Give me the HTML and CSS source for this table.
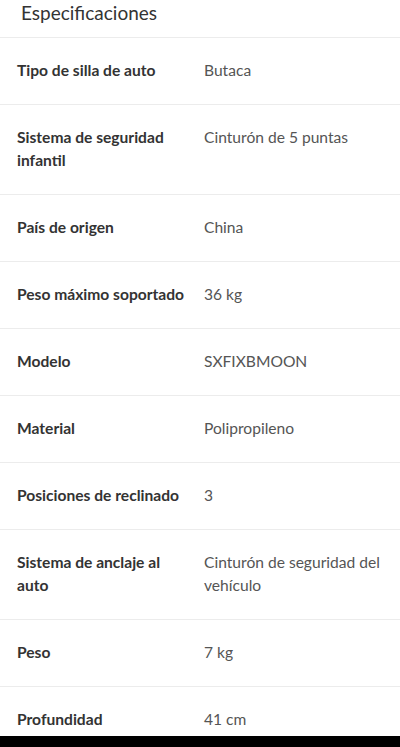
FILE: index.html
```html
<!DOCTYPE html>
<html>
  <head>
    <title>Especificaciones</title>
    <link rel="stylesheet" href="styles.css">
  </head>
  <body>
    <div class="specs">
      <h2 class="specs-title">Especificaciones</h2>
      <div class="spec-row">
        <div class="spec-label">Tipo de silla de auto</div>
        <div class="spec-value">Butaca</div>
      </div>
      <div class="spec-row">
        <div class="spec-label">Sistema de seguridad infantil</div>
        <div class="spec-value">Cinturón de 5 puntas</div>
      </div>
      <div class="spec-row">
        <div class="spec-label">País de origen</div>
        <div class="spec-value">China</div>
      </div>
      <div class="spec-row">
        <div class="spec-label">Peso máximo soportado</div>
        <div class="spec-value">36 kg</div>
      </div>
      <div class="spec-row">
        <div class="spec-label">Modelo</div>
        <div class="spec-value">SXFIXBMOON</div>
      </div>
      <div class="spec-row">
        <div class="spec-label">Material</div>
        <div class="spec-value">Polipropileno</div>
      </div>
      <div class="spec-row">
        <div class="spec-label">Posiciones de reclinado</div>
        <div class="spec-value">3</div>
      </div>
      <div class="spec-row">
        <div class="spec-label">Sistema de anclaje al auto</div>
        <div class="spec-value">Cinturón de seguridad del vehículo</div>
      </div>
      <div class="spec-row">
        <div class="spec-label">Peso</div>
        <div class="spec-value">7 kg</div>
      </div>
      <div class="spec-row">
        <div class="spec-label">Profundidad</div>
        <div class="spec-value">41 cm</div>
      </div>
    </div>
    <div class="nav-bar"></div>
  </body>
</html>
```

FILE: styles.css
```css
body {
  font-family: Lato, "Open Sans", sans-serif;
  background-color: #fff;
  margin: 0;
  padding: 0;
  height: 100vh;
  overflow: hidden;
}

.specs-title {
  margin: 0;
  padding: 0 0 11px 21px;
  font-size: 19px;
  font-weight: normal;
  line-height: 26px;
  color: #333;
  border-bottom: 1px solid #ececec;
}

.spec-row {
  display: grid;
  grid-template-columns: 187px 1fr;
  padding: 21px 16px 22px 17px;
  border-bottom: 1px solid #ececec;
  font-size: 15.6px;
  line-height: 23px;
}

.spec-label {
  font-weight: bold;
  color: #333;
  padding-right: 15px;
}

.spec-value {
  color: #555;
}

.nav-bar {
  position: fixed;
  left: 0;
  right: 0;
  bottom: 0;
  height: 11px;
  background-color: #000;
}
```
